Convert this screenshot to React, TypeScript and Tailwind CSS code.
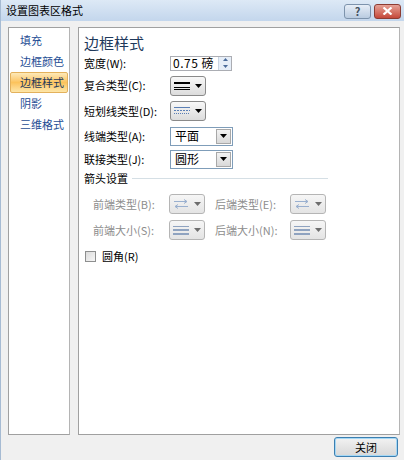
import type { ReactNode } from 'react'

const FONT = { fontFamily: '"Noto Sans CJK SC", "Noto Sans", sans-serif' }

const NAV_ITEMS = ['填充', '边框颜色', '边框样式', '阴影', '三维格式']
const ACTIVE_NAV = '边框样式'

function Caret({ muted = false }: { muted?: boolean }) {
  return (
    <svg width="7" height="4" viewBox="0 0 7 4" className="shrink-0">
      <path d="M0 0h7L3.5 4z" fill={muted ? '#6d6d6d' : '#000'} />
    </svg>
  )
}

function LineGlyph({ kind }: { kind: 'compound' | 'dash' | 'arrow' | 'size' }) {
  if (kind === 'compound') {
    return (
      <svg width="16" height="10" viewBox="0 0 16 10">
        <rect x="0" y="1" width="16" height="2" fill="#000" />
        <rect x="0" y="6" width="16" height="1" fill="#000" />
        <rect x="0" y="8" width="16" height="1" fill="#000" />
      </svg>
    )
  }
  if (kind === 'dash') {
    return (
      <svg width="16" height="10" viewBox="0 0 16 10">
        <path d="M0 1.5h16" stroke="#5b7fb5" strokeWidth="1" />
        <path d="M0 4.5h16" stroke="#5b7fb5" strokeWidth="1" strokeDasharray="2 1" />
        <path d="M0 7.5h16" stroke="#5b7fb5" strokeWidth="1" strokeDasharray="1 1" />
      </svg>
    )
  }
  if (kind === 'arrow') {
    return (
      <svg width="16" height="12" viewBox="0 0 16 12">
        <path d="M1 3.5h13M11 1.5l3 2-3 2" stroke="#9ab0cf" strokeWidth="1" fill="none" />
        <path d="M2 8.5h13M5 6.5l-3 2 3 2" stroke="#9ab0cf" strokeWidth="1" fill="none" />
      </svg>
    )
  }
  return (
    <svg width="16" height="10" viewBox="0 0 16 10">
      <rect x="0" y="1" width="16" height="1" fill="#8fa3c0" />
      <rect x="0" y="4" width="16" height="2" fill="#8fa3c0" />
      <rect x="0" y="8" width="16" height="2" fill="#8fa3c0" />
    </svg>
  )
}

function GlyphButton({
  kind,
  disabled = false,
}: {
  kind: 'compound' | 'dash' | 'arrow' | 'size'
  disabled?: boolean
}) {
  return (
    <div
      className={
        disabled
          ? 'flex h-[20px] w-[36px] items-center justify-center gap-[5px] rounded-[3px] border border-[#b5b5b5] bg-gradient-to-b from-[#f6f6f6] to-[#e4e4e4]'
          : 'flex h-[20px] w-[36px] items-center justify-center gap-[5px] rounded-[3px] border border-[#8a8a8a] bg-gradient-to-b from-[#f8f8f8] to-[#dcdcdc]'
      }
    >
      <LineGlyph kind={kind} />
      <Caret muted={disabled} />
    </div>
  )
}

function SelectBox({ value }: { value: string }) {
  return (
    <div className="flex h-[19px] w-[63px] items-center border border-[#7f9db9] bg-white pl-[4px] pr-[1px]">
      <span className="flex-1 text-[12px] leading-none text-black">{value}</span>
      <div className="flex h-[15px] w-[15px] items-center justify-center border border-[#a8a8a8] bg-gradient-to-b from-[#f3f3f3] to-[#d9d9d9]">
        <Caret />
      </div>
    </div>
  )
}

function SpinBox({ value }: { value: string }) {
  return (
    <div className="flex h-[15px] w-[62px] items-center border border-[#abadb3] bg-white pl-[2px]">
      <span className="flex-1 text-[12px] leading-none tracking-[0.5px] text-black">{value}</span>
      <div className="flex h-[13px] w-[13px] flex-col border-l border-[#c9d5e3] bg-[#e6eef8]">
        <div className="flex flex-1 items-center justify-center">
          <svg width="5" height="3" viewBox="0 0 5 3">
            <path d="M0 3h5L2.5 0z" fill="#4b6c9b" />
          </svg>
        </div>
        <div className="flex flex-1 items-center justify-center">
          <svg width="5" height="3" viewBox="0 0 5 3">
            <path d="M0 0h5L2.5 3z" fill="#4b6c9b" />
          </svg>
        </div>
      </div>
    </div>
  )
}

function FieldRow({ label, children, height }: { label: string; children: ReactNode; height: string }) {
  return (
    <div className={`flex items-center ${height}`}>
      <span className="w-[86px] whitespace-nowrap text-[11px] leading-none text-black">{label}</span>
      {children}
    </div>
  )
}

function TitleBar() {
  return (
    <div className="flex h-[21px] items-center justify-between bg-gradient-to-b from-[#dde9f6] to-[#c3d6ec] pl-[5px] pr-[3px]">
      <span className="text-[11px] leading-none text-black">设置图表区格式</span>
      <div className="flex items-center gap-[3px] pt-[1px]">
        <div className="flex h-[15px] w-[27px] items-center justify-center rounded-[3px] border border-[#7d93ac] bg-gradient-to-b from-[#e7eef7] to-[#b9cbe0] text-[11px] font-bold leading-none text-[#44505e]">
          ?
        </div>
        <div className="flex h-[15px] w-[27px] items-center justify-center rounded-[3px] border border-[#8c3c33] bg-gradient-to-b from-[#e5a197] to-[#c4473a]">
          <svg width="11" height="8" viewBox="0 0 11 8">
            <path d="M1.5 0.5l8 7M9.5 0.5l-8 7" stroke="#fff" strokeWidth="2.2" />
          </svg>
        </div>
      </div>
    </div>
  )
}

function NavPanel() {
  return (
    <div className="flex w-[62px] flex-col border border-[#a0a0a0] border-r-[#b4b4b4] bg-white pt-[2px]">
      {NAV_ITEMS.map((item) => (
        <div key={item} className="flex h-[21px] items-center px-[1px]">
          <div
            className={
              item === ACTIVE_NAV
                ? 'flex h-[21px] w-full items-center whitespace-nowrap rounded-[2px] border border-[#e3b15c] bg-gradient-to-b from-[#fde9b8] via-[#fcc35c] to-[#fde6a8] pl-[9px] text-[11px] leading-none text-[#1e395b]'
                : 'flex h-[21px] w-full items-center whitespace-nowrap pl-[10px] text-[11px] leading-none text-[#1e4d94]'
            }
          >
            {item}
          </div>
        </div>
      ))}
    </div>
  )
}

function ContentPanel() {
  return (
    <div className="flex flex-1 flex-col border border-[#a0a0a0] border-r-[#b4b4b4] bg-white pl-[5px] pt-[5px]">
      <div className="text-[15px] leading-[20px] text-[#1e395b]">边框样式</div>
      <div className="flex flex-col">
        <FieldRow label="宽度(W):" height="h-[20px]">
          <SpinBox value="0.75 磅" />
        </FieldRow>
        <FieldRow label="复合类型(C):" height="h-[25px]">
          <GlyphButton kind="compound" />
        </FieldRow>
        <FieldRow label="短划线类型(D):" height="h-[26px]">
          <GlyphButton kind="dash" />
        </FieldRow>
        <FieldRow label="线端类型(A):" height="h-[24px]">
          <SelectBox value="平面" />
        </FieldRow>
        <FieldRow label="联接类型(J):" height="h-[22px]">
          <SelectBox value="圆形" />
        </FieldRow>
      </div>
      <div className="flex h-[16px] items-center gap-[4px] pr-[71px]">
        <span className="text-[11px] leading-none text-black">箭头设置</span>
        <div className="h-px flex-1 bg-[#d5dfe5]" />
      </div>
      <div className="flex flex-col pl-[9px] pt-[5px]">
        <div className="flex h-[26px] items-center">
          <span className="w-[76px] whitespace-nowrap text-[11px] leading-none text-[#8d8d8d]">前端类型(B):</span>
          <GlyphButton kind="arrow" disabled />
          <span className="ml-[10px] w-[75px] whitespace-nowrap text-[11px] leading-none text-[#8d8d8d]">后端类型(E):</span>
          <GlyphButton kind="arrow" disabled />
        </div>
        <div className="flex h-[26px] items-center">
          <span className="w-[76px] whitespace-nowrap text-[11px] leading-none text-[#8d8d8d]">前端大小(S):</span>
          <GlyphButton kind="size" disabled />
          <span className="ml-[10px] w-[75px] whitespace-nowrap text-[11px] leading-none text-[#8d8d8d]">后端大小(N):</span>
          <GlyphButton kind="size" disabled />
        </div>
      </div>
      <div className="flex h-[26px] items-center gap-[6px] pl-[1px]">
        <div className="h-[11px] w-[11px] border border-[#8e8f8f] bg-gradient-to-br from-[#dcdcdc] to-[#f7f7f7]" />
        <span className="text-[11px] leading-none text-black">圆角(R)</span>
      </div>
    </div>
  )
}

export default function App() {
  return (
    <div
      className="flex h-[460px] w-[404px] flex-col overflow-hidden border-l border-[#a6bbd3] bg-[#f0f0f0]"
      style={FONT}
    >
      <TitleBar />
      <div className="flex h-[414px] gap-[8px] pl-[7px] pr-[4px] pt-[6px]">
        <NavPanel />
        <ContentPanel />
      </div>
      <div className="flex justify-end pr-[6px] pt-[2px]">
        <button
          type="button"
          className="flex h-[20px] w-[64px] items-center justify-center rounded-[3px] border border-[#3c7fb1] bg-gradient-to-b from-[#f2f2f2] to-[#d8d8d8] text-[11px] leading-none text-black shadow-[inset_0_0_0_1px_#a6d8f5]"
        >
          关闭
        </button>
      </div>
    </div>
  )
}
